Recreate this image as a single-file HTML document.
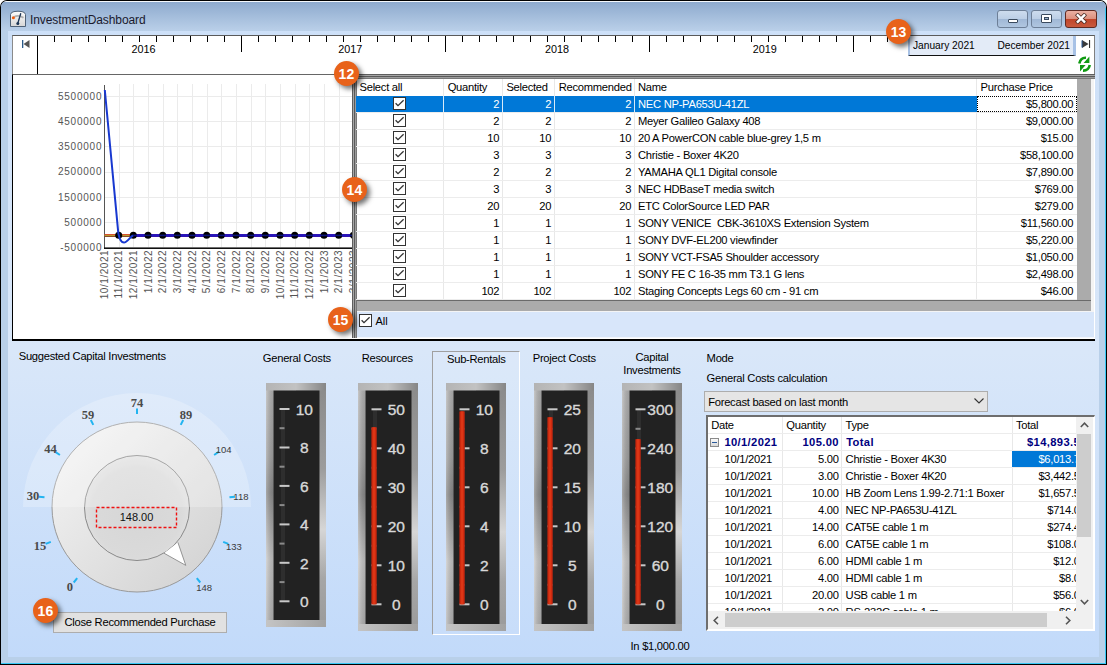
<!DOCTYPE html><html><head><meta charset="utf-8"><style>
*{margin:0;padding:0;box-sizing:border-box}
html,body{width:1107px;height:665px;overflow:hidden;background:#fff;font-family:"Liberation Sans",sans-serif;}
.abs{position:absolute}
.t{position:absolute;white-space:pre;font-size:10.5px;color:#000;line-height:1}
.u{position:absolute;white-space:pre;font-size:11.2px;letter-spacing:-0.27px;color:#000;line-height:1}
</style></head><body>

<div class="abs" style="left:0;top:0;width:1107px;height:665px;background:#000;border-radius:7px 7px 0 0"></div>
<div class="abs" style="left:1px;top:1px;width:1105px;height:663px;background:#b9d0e9;border-radius:6px 6px 0 0"></div>
<div class="abs" style="left:1px;top:1px;width:1105px;height:30px;background:linear-gradient(#f4f8fc 0,#f4f8fc 1px,#8eaace 1px,#bad0e9 100%);border-radius:6px 6px 0 0"></div>
<div class="abs" style="left:1px;top:663px;width:1105px;height:1px;background:#38c8f5"></div>
<div class="abs" style="left:1105px;top:8px;width:1px;height:656px;background:#38c8f5"></div>
<div class="abs" style="left:8px;top:31px;width:1091px;height:626px;background:linear-gradient(#cde0f8 0px,#d9e7f9 320px,#c2dafa 100%)"></div>
<svg class="abs" style="left:9px;top:10px" width="18" height="18" viewBox="9 10 18 18">
<defs><linearGradient id="ic" x1="0" y1="0" x2="0" y2="1"><stop offset="0" stop-color="#fdfdfd"/><stop offset="1" stop-color="#d6d6d6"/></linearGradient></defs>
<path d="M10.5 26.5 L10.5 14.5 Q11 12 14 11.6 Q18 10.8 22 11.6 Q25 12 25.5 14.5 L25.5 26.5 Z" fill="url(#ic)" stroke="#4f6278" stroke-width="1"/>
<path d="M14 17 Q18.5 14.5 23.5 17.8" stroke="#b0b0b0" stroke-width="1.8" fill="none"/>
<circle cx="13.4" cy="17.7" r="1.5" fill="#f05a0a"/>
<line x1="20.8" y1="13.3" x2="17.9" y2="23" stroke="#1b3556" stroke-width="1.3"/>
<circle cx="17.8" cy="23.6" r="1.5" fill="#1b3556"/>
</svg>
<div class="t" style="left:30px;top:14px;font-size:12px;letter-spacing:-0.1px;color:#1a1a2e">InvestmentDashboard</div>
<div class="abs" style="left:997px;top:10px;width:31px;height:18px;border:1px solid #6d7f97;border-radius:3px;background:linear-gradient(#cddcee 0%,#bccfe6 48%,#a0b8d6 52%,#b0c6e0 100%)"></div>
<div class="abs" style="left:1031px;top:10px;width:31px;height:18px;border:1px solid #6d7f97;border-radius:3px;background:linear-gradient(#cddcee 0%,#bccfe6 48%,#a0b8d6 52%,#b0c6e0 100%)"></div>
<div class="abs" style="left:1065px;top:10px;width:32px;height:18px;border:1px solid #5e2a22;border-radius:3px;background:linear-gradient(#eab0a2 0%,#dc907e 48%,#c0452a 52%,#c95a3e 100%)"></div>
<div class="abs" style="left:1008px;top:19px;width:10px;height:4px;background:#fff;border:1px solid #3a4a5e;border-radius:1px"></div>
<div class="abs" style="left:1041px;top:14px;width:11px;height:9px;background:#fff;border:1px solid #3a4a5e;border-radius:1px"></div>
<div class="abs" style="left:1044px;top:17px;width:5px;height:3px;background:#9bb0c9;border:1px solid #3a4a5e"></div>
<svg class="abs" style="left:1075px;top:13px" width="12" height="11" viewBox="0 0 12 11">
<path d="M2.8 2.3 L9.2 8.7 M9.2 2.3 L2.8 8.7" stroke="#4a2a22" stroke-width="4" stroke-linecap="square"/>
<path d="M2.8 2.3 L9.2 8.7 M9.2 2.3 L2.8 8.7" stroke="#fff" stroke-width="2.4" stroke-linecap="square"/>
</svg>
<div class="abs" style="left:12px;top:35px;width:1083px;height:40px;background:#fff;border-top:1px solid #5a5a5a;border-left:1px solid #8a8a8a;border-right:1px solid #808080"></div>
<svg class="abs" style="left:21px;top:39px" width="10" height="10" viewBox="0 0 10 10">
<rect x="1" y="1" width="1.3" height="8" fill="#2a5a8a"/><path d="M8.5 1 L2.5 5 L8.5 9 Z" fill="#555"/></svg>
<div class="abs" style="left:37px;top:36px;width:1px;height:38px;background:#000"></div>
<svg class="abs" style="left:0;top:0" width="1107" height="80"><rect x="54" y="36" width="1" height="6" fill="#000"/><rect x="71" y="36" width="1" height="6" fill="#000"/><rect x="88" y="36" width="1" height="6" fill="#000"/><rect x="105" y="36" width="1" height="6" fill="#000"/><rect x="122" y="36" width="1" height="6" fill="#000"/><rect x="139" y="36" width="1" height="6" fill="#000"/><rect x="156" y="36" width="1" height="6" fill="#000"/><rect x="173" y="36" width="1" height="6" fill="#000"/><rect x="190" y="36" width="1" height="6" fill="#000"/><rect x="207" y="36" width="1" height="6" fill="#000"/><rect x="224" y="36" width="1" height="6" fill="#000"/><rect x="241" y="36" width="1" height="16" fill="#000"/><rect x="258" y="36" width="1" height="6" fill="#000"/><rect x="275" y="36" width="1" height="6" fill="#000"/><rect x="292" y="36" width="1" height="6" fill="#000"/><rect x="309" y="36" width="1" height="6" fill="#000"/><rect x="326" y="36" width="1" height="6" fill="#000"/><rect x="343" y="36" width="1" height="6" fill="#000"/><rect x="360" y="36" width="1" height="6" fill="#000"/><rect x="377" y="36" width="1" height="6" fill="#000"/><rect x="394" y="36" width="1" height="6" fill="#000"/><rect x="411" y="36" width="1" height="6" fill="#000"/><rect x="428" y="36" width="1" height="6" fill="#000"/><rect x="445" y="36" width="1" height="16" fill="#000"/><rect x="462" y="36" width="1" height="6" fill="#000"/><rect x="479" y="36" width="1" height="6" fill="#000"/><rect x="496" y="36" width="1" height="6" fill="#000"/><rect x="513" y="36" width="1" height="6" fill="#000"/><rect x="530" y="36" width="1" height="6" fill="#000"/><rect x="547" y="36" width="1" height="6" fill="#000"/><rect x="564" y="36" width="1" height="6" fill="#000"/><rect x="581" y="36" width="1" height="6" fill="#000"/><rect x="598" y="36" width="1" height="6" fill="#000"/><rect x="615" y="36" width="1" height="6" fill="#000"/><rect x="632" y="36" width="1" height="6" fill="#000"/><rect x="649" y="36" width="1" height="16" fill="#000"/><rect x="666" y="36" width="1" height="6" fill="#000"/><rect x="683" y="36" width="1" height="6" fill="#000"/><rect x="700" y="36" width="1" height="6" fill="#000"/><rect x="717" y="36" width="1" height="6" fill="#000"/><rect x="734" y="36" width="1" height="6" fill="#000"/><rect x="751" y="36" width="1" height="6" fill="#000"/><rect x="768" y="36" width="1" height="6" fill="#000"/><rect x="785" y="36" width="1" height="6" fill="#000"/><rect x="802" y="36" width="1" height="6" fill="#000"/><rect x="819" y="36" width="1" height="6" fill="#000"/><rect x="836" y="36" width="1" height="6" fill="#000"/><rect x="853" y="36" width="1" height="16" fill="#000"/><rect x="870" y="36" width="1" height="6" fill="#000"/><rect x="887" y="36" width="1" height="6" fill="#000"/><rect x="904" y="36" width="1" height="6" fill="#000"/></svg>
<div class="t" style="left:131.4px;top:43.6px;font-size:10.8px">2016</div>
<div class="t" style="left:338.3px;top:43.6px;font-size:10.8px">2017</div>
<div class="t" style="left:545px;top:43.6px;font-size:10.8px">2018</div>
<div class="t" style="left:752.8px;top:43.6px;font-size:10.8px">2019</div>
<div class="abs" style="left:908px;top:36px;width:168px;height:20px;background:#e3ebf7;border-left:2px solid #a8c2e6;border-right:3px solid #a8c2e6;border-bottom:1px solid #111"></div>
<div class="t" style="left:913px;top:40.5px;font-size:10.2px">January 2021</div>
<div class="t" style="left:990px;top:40.5px;font-size:10.2px;width:80px;text-align:right">December 2021</div>
<svg class="abs" style="left:1078px;top:36px" width="16" height="40" viewBox="1078 36 16 40">
<path d="M1082 40 L1088.6 44 L1082 48 Z" fill="#3a3a3a"/><path d="M1082 40.5 L1082 47.5" stroke="#2a5a9a" stroke-width="1"/>
<rect x="1089" y="40" width="1.1" height="8" fill="#333"/>
<path d="M1079.3 63.5 Q1080.5 57.5 1086 57.8" stroke="#0f9a12" stroke-width="2.6" fill="none"/>
<path d="M1083.6 63 L1089.4 63 L1089.4 56.6 Z" fill="#0f9a12"/>
<path d="M1089.8 65 Q1088.5 70.8 1083 70.6" stroke="#0f9a12" stroke-width="2.6" fill="none"/>
<path d="M1080 65 L1085.6 65 L1080 71.5 Z" fill="#0f9a12"/>
</svg>
<div class="abs" style="left:12px;top:74px;width:1083px;height:267px;background:#fff;border-left:1px solid #000;border-bottom:2px solid #000;border-top:1px solid #666"></div>
<svg class="abs" style="left:0;top:0" width="352" height="341"><rect x="104" y="96" width="248" height="1" fill="#ebebeb"/><rect x="104" y="121" width="248" height="1" fill="#ebebeb"/><rect x="104" y="146" width="248" height="1" fill="#ebebeb"/><rect x="104" y="172" width="248" height="1" fill="#ebebeb"/><rect x="104" y="197" width="248" height="1" fill="#ebebeb"/><rect x="104" y="222" width="248" height="1" fill="#ebebeb"/><rect x="119" y="84" width="1" height="163" fill="#ebebeb"/><rect x="133" y="84" width="1" height="163" fill="#ebebeb"/><rect x="148" y="84" width="1" height="163" fill="#ebebeb"/><rect x="163" y="84" width="1" height="163" fill="#ebebeb"/><rect x="177" y="84" width="1" height="163" fill="#ebebeb"/><rect x="192" y="84" width="1" height="163" fill="#ebebeb"/><rect x="207" y="84" width="1" height="163" fill="#ebebeb"/><rect x="221" y="84" width="1" height="163" fill="#ebebeb"/><rect x="236" y="84" width="1" height="163" fill="#ebebeb"/><rect x="251" y="84" width="1" height="163" fill="#ebebeb"/><rect x="265" y="84" width="1" height="163" fill="#ebebeb"/><rect x="280" y="84" width="1" height="163" fill="#ebebeb"/><rect x="295" y="84" width="1" height="163" fill="#ebebeb"/><rect x="309" y="84" width="1" height="163" fill="#ebebeb"/><rect x="324" y="84" width="1" height="163" fill="#ebebeb"/><rect x="339" y="84" width="1" height="163" fill="#ebebeb"/><rect x="353" y="84" width="1" height="163" fill="#ebebeb"/><rect x="104" y="85" width="1" height="163" fill="#555"/><rect x="104" y="247.4" width="248" height="1.6" fill="#111"/><text x="102.3" y="99.7" font-size="10" letter-spacing="0.78" fill="#555" text-anchor="end" font-family="Liberation Sans">5500000</text><text x="102.3" y="124.9" font-size="10" letter-spacing="0.78" fill="#555" text-anchor="end" font-family="Liberation Sans">4500000</text><text x="102.3" y="150.1" font-size="10" letter-spacing="0.78" fill="#555" text-anchor="end" font-family="Liberation Sans">3500000</text><text x="102.3" y="175.3" font-size="10" letter-spacing="0.78" fill="#555" text-anchor="end" font-family="Liberation Sans">2500000</text><text x="102.3" y="200.5" font-size="10" letter-spacing="0.78" fill="#555" text-anchor="end" font-family="Liberation Sans">1500000</text><text x="102.3" y="225.7" font-size="10" letter-spacing="0.78" fill="#555" text-anchor="end" font-family="Liberation Sans">500000</text><text x="102.3" y="250.9" font-size="10" letter-spacing="0.78" fill="#555" text-anchor="end" font-family="Liberation Sans">-500000</text><rect x="104.5" y="234" width="27" height="1" fill="#d8502e"/><rect x="104.5" y="235" width="27" height="1" fill="#b89a30"/><rect x="104.5" y="236" width="27" height="1" fill="#8a4a28"/><rect x="131" y="234" width="221" height="3" fill="#3a10b0"/><circle cx="118.7" cy="235.3" r="3.5" fill="#000"/><circle cx="133.3" cy="235.3" r="3.5" fill="#000"/><circle cx="148.0" cy="235.3" r="3.5" fill="#000"/><circle cx="162.7" cy="235.3" r="3.5" fill="#000"/><circle cx="177.3" cy="235.3" r="3.5" fill="#000"/><circle cx="192.0" cy="235.3" r="3.5" fill="#000"/><circle cx="206.7" cy="235.3" r="3.5" fill="#000"/><circle cx="221.3" cy="235.3" r="3.5" fill="#000"/><circle cx="236.0" cy="235.3" r="3.5" fill="#000"/><circle cx="250.7" cy="235.3" r="3.5" fill="#000"/><circle cx="265.3" cy="235.3" r="3.5" fill="#000"/><circle cx="280.0" cy="235.3" r="3.5" fill="#000"/><circle cx="294.7" cy="235.3" r="3.5" fill="#000"/><circle cx="309.3" cy="235.3" r="3.5" fill="#000"/><circle cx="324.0" cy="235.3" r="3.5" fill="#000"/><circle cx="338.7" cy="235.3" r="3.5" fill="#000"/><circle cx="353.3" cy="235.3" r="3.5" fill="#000"/><path d="M104.8 90 L118.3 233 C119.5 240 121.5 242.5 124 242.5 C127 242.5 130 237 133 235.5" stroke="#1838d0" stroke-width="2" fill="none"/><rect x="133" y="234.6" width="219" height="1.6" fill="#1020c8" opacity="0.6"/><text transform="translate(107.6,249.8) rotate(-90)" font-size="10" letter-spacing="0.55" fill="#555" text-anchor="end" font-family="Liberation Sans">10/1/2021</text><text transform="translate(122.3,249.8) rotate(-90)" font-size="10" letter-spacing="0.55" fill="#555" text-anchor="end" font-family="Liberation Sans">11/1/2021</text><text transform="translate(136.9,249.8) rotate(-90)" font-size="10" letter-spacing="0.55" fill="#555" text-anchor="end" font-family="Liberation Sans">12/1/2021</text><text transform="translate(151.6,249.8) rotate(-90)" font-size="10" letter-spacing="0.55" fill="#555" text-anchor="end" font-family="Liberation Sans">1/1/2022</text><text transform="translate(166.3,249.8) rotate(-90)" font-size="10" letter-spacing="0.55" fill="#555" text-anchor="end" font-family="Liberation Sans">2/1/2022</text><text transform="translate(180.9,249.8) rotate(-90)" font-size="10" letter-spacing="0.55" fill="#555" text-anchor="end" font-family="Liberation Sans">3/1/2022</text><text transform="translate(195.6,249.8) rotate(-90)" font-size="10" letter-spacing="0.55" fill="#555" text-anchor="end" font-family="Liberation Sans">4/1/2022</text><text transform="translate(210.3,249.8) rotate(-90)" font-size="10" letter-spacing="0.55" fill="#555" text-anchor="end" font-family="Liberation Sans">5/1/2022</text><text transform="translate(224.9,249.8) rotate(-90)" font-size="10" letter-spacing="0.55" fill="#555" text-anchor="end" font-family="Liberation Sans">6/1/2022</text><text transform="translate(239.6,249.8) rotate(-90)" font-size="10" letter-spacing="0.55" fill="#555" text-anchor="end" font-family="Liberation Sans">7/1/2022</text><text transform="translate(254.3,249.8) rotate(-90)" font-size="10" letter-spacing="0.55" fill="#555" text-anchor="end" font-family="Liberation Sans">8/1/2022</text><text transform="translate(268.9,249.8) rotate(-90)" font-size="10" letter-spacing="0.55" fill="#555" text-anchor="end" font-family="Liberation Sans">9/1/2022</text><text transform="translate(283.6,249.8) rotate(-90)" font-size="10" letter-spacing="0.55" fill="#555" text-anchor="end" font-family="Liberation Sans">10/1/2022</text><text transform="translate(298.3,249.8) rotate(-90)" font-size="10" letter-spacing="0.55" fill="#555" text-anchor="end" font-family="Liberation Sans">11/1/2022</text><text transform="translate(312.9,249.8) rotate(-90)" font-size="10" letter-spacing="0.55" fill="#555" text-anchor="end" font-family="Liberation Sans">12/1/2022</text><text transform="translate(327.6,249.8) rotate(-90)" font-size="10" letter-spacing="0.55" fill="#555" text-anchor="end" font-family="Liberation Sans">1/1/2023</text><text transform="translate(342.3,249.8) rotate(-90)" font-size="10" letter-spacing="0.55" fill="#555" text-anchor="end" font-family="Liberation Sans">2/1/2023</text><text transform="translate(356.9,249.8) rotate(-90)" font-size="10" letter-spacing="0.55" fill="#555" text-anchor="end" font-family="Liberation Sans">3/1/2023</text></svg>
<div class="abs" style="left:352px;top:74px;width:743px;height:264px;background:#fff"></div>
<div class="abs" style="left:352px;top:74px;width:743px;height:1px;background:#5e5e5e"></div>
<div class="abs" style="left:352px;top:74px;width:1px;height:264px;background:#5e5e5e"></div>
<div class="abs" style="left:353px;top:75px;width:742px;height:1px;background:#a6a6a6"></div>
<div class="abs" style="left:353px;top:75px;width:1px;height:263px;background:#a6a6a6"></div>
<div class="abs" style="left:354px;top:76px;width:741px;height:1px;background:#5a5a5a"></div>
<div class="abs" style="left:354px;top:76px;width:1px;height:262px;background:#5a5a5a"></div>
<div class="abs" style="left:355px;top:77px;width:740px;height:1px;background:#9c9c9c"></div>
<div class="abs" style="left:355px;top:77px;width:1px;height:261px;background:#9c9c9c"></div>
<div class="abs" style="left:356px;top:78px;width:739px;height:1px;background:#787878"></div>
<div class="abs" style="left:356px;top:78px;width:1px;height:260px;background:#787878"></div>
<div class="abs" style="left:1077px;top:79px;width:14px;height:232px;background:#ababab"></div>
<div class="abs" style="left:357px;top:300px;width:734px;height:11px;background:#ababab;border-top:1px solid #6a6a6a"></div>
<div class="abs" style="left:1091px;top:79px;width:4px;height:233px;background:#f4f4f4"></div>
<div class="abs" style="left:357px;top:311px;width:738px;height:1px;background:#f4f4f4"></div>
<div class="abs" style="left:357px;top:312px;width:737px;height:25px;background:#d8e6fa"></div>
<div class="abs" style="left:1094px;top:79px;width:1px;height:259px;background:#fff"></div>
<div class="abs" style="left:357px;top:337px;width:738px;height:1px;background:#f2f6fc"></div>
<svg class="abs" style="left:359px;top:314px" width="13" height="13" viewBox="0 0 13 13"><rect x="0.5" y="0.5" width="12" height="12" fill="#fff" stroke="#333"/><path d="M2.6 6.2 L5 8.6 L10.6 3.2" stroke="#333" stroke-width="1.3" fill="none"/></svg>
<div class="t" style="left:375.5px;top:315.5px;font-size:11px">All</div>
<div class="u" style="left:359.5px;top:81.8px">Select all</div>
<div class="u" style="left:447.7px;top:81.8px">Quantity</div>
<div class="u" style="left:506.4px;top:81.8px">Selected</div>
<div class="u" style="left:558.7px;top:81.8px">Recommended</div>
<div class="u" style="left:638px;top:81.8px">Name</div>
<div class="u" style="left:980.6px;top:81.8px">Purchase Price</div>
<div class="abs" style="left:443px;top:79px;width:1px;height:221px;background:#e8e8e8"></div>
<div class="abs" style="left:502px;top:79px;width:1px;height:221px;background:#e8e8e8"></div>
<div class="abs" style="left:554px;top:79px;width:1px;height:221px;background:#e8e8e8"></div>
<div class="abs" style="left:634px;top:79px;width:1px;height:221px;background:#e8e8e8"></div>
<div class="abs" style="left:976px;top:79px;width:1px;height:221px;background:#e8e8e8"></div>
<div class="abs" style="left:356px;top:112px;width:721px;height:1px;background:#ececec"></div>
<div class="abs" style="left:356px;top:129px;width:721px;height:1px;background:#ececec"></div>
<div class="abs" style="left:356px;top:146px;width:721px;height:1px;background:#ececec"></div>
<div class="abs" style="left:356px;top:163px;width:721px;height:1px;background:#ececec"></div>
<div class="abs" style="left:356px;top:180px;width:721px;height:1px;background:#ececec"></div>
<div class="abs" style="left:356px;top:197px;width:721px;height:1px;background:#ececec"></div>
<div class="abs" style="left:356px;top:214px;width:721px;height:1px;background:#ececec"></div>
<div class="abs" style="left:356px;top:231px;width:721px;height:1px;background:#ececec"></div>
<div class="abs" style="left:356px;top:248px;width:721px;height:1px;background:#ececec"></div>
<div class="abs" style="left:356px;top:265px;width:721px;height:1px;background:#ececec"></div>
<div class="abs" style="left:356px;top:282px;width:721px;height:1px;background:#ececec"></div>
<div class="abs" style="left:356px;top:299px;width:721px;height:1px;background:#ececec"></div>
<div class="abs" style="left:356px;top:96px;width:621px;height:16px;background:#0078d7"></div>
<div class="abs" style="left:443px;top:96px;width:1px;height:16px;background:#fff;opacity:.85"></div>
<div class="abs" style="left:502px;top:96px;width:1px;height:16px;background:#fff;opacity:.85"></div>
<div class="abs" style="left:554px;top:96px;width:1px;height:16px;background:#fff;opacity:.85"></div>
<div class="abs" style="left:634px;top:96px;width:1px;height:16px;background:#fff;opacity:.85"></div>
<svg class="abs" style="left:393px;top:97px" width="13" height="13" viewBox="0 0 13 13"><rect x="0.5" y="0.5" width="12" height="12" fill="#fff" stroke="#333"/><path d="M2.6 6.2 L5 8.6 L10.6 3.2" stroke="#333" stroke-width="1.3" fill="none"/></svg>
<div class="u" style="left:443px;width:56.27px;text-align:right;top:98.7px;color:#fff">2</div>
<div class="u" style="left:502px;width:49.27px;text-align:right;top:98.7px;color:#fff">2</div>
<div class="u" style="left:554px;width:77.27px;text-align:right;top:98.7px;color:#fff">2</div>
<div class="u" style="left:638px;top:98.7px;color:#fff">NEC NP-PA653U-41ZL</div>
<div class="u" style="left:977px;width:96.27px;text-align:right;top:98.7px">$5,800.00</div>
<svg class="abs" style="left:393px;top:114px" width="13" height="13" viewBox="0 0 13 13"><rect x="0.5" y="0.5" width="12" height="12" fill="#fff" stroke="#333"/><path d="M2.6 6.2 L5 8.6 L10.6 3.2" stroke="#333" stroke-width="1.3" fill="none"/></svg>
<div class="u" style="left:443px;width:56.27px;text-align:right;top:115.7px;color:#000">2</div>
<div class="u" style="left:502px;width:49.27px;text-align:right;top:115.7px;color:#000">2</div>
<div class="u" style="left:554px;width:77.27px;text-align:right;top:115.7px;color:#000">2</div>
<div class="u" style="left:638px;top:115.7px;color:#000">Meyer Galileo Galaxy 408</div>
<div class="u" style="left:977px;width:96.27px;text-align:right;top:115.7px">$9,000.00</div>
<svg class="abs" style="left:393px;top:131px" width="13" height="13" viewBox="0 0 13 13"><rect x="0.5" y="0.5" width="12" height="12" fill="#fff" stroke="#333"/><path d="M2.6 6.2 L5 8.6 L10.6 3.2" stroke="#333" stroke-width="1.3" fill="none"/></svg>
<div class="u" style="left:443px;width:56.27px;text-align:right;top:132.7px;color:#000">10</div>
<div class="u" style="left:502px;width:49.27px;text-align:right;top:132.7px;color:#000">10</div>
<div class="u" style="left:554px;width:77.27px;text-align:right;top:132.7px;color:#000">10</div>
<div class="u" style="left:638px;top:132.7px;color:#000">20 A PowerCON cable blue-grey 1,5 m</div>
<div class="u" style="left:977px;width:96.27px;text-align:right;top:132.7px">$15.00</div>
<svg class="abs" style="left:393px;top:148px" width="13" height="13" viewBox="0 0 13 13"><rect x="0.5" y="0.5" width="12" height="12" fill="#fff" stroke="#333"/><path d="M2.6 6.2 L5 8.6 L10.6 3.2" stroke="#333" stroke-width="1.3" fill="none"/></svg>
<div class="u" style="left:443px;width:56.27px;text-align:right;top:149.7px;color:#000">3</div>
<div class="u" style="left:502px;width:49.27px;text-align:right;top:149.7px;color:#000">3</div>
<div class="u" style="left:554px;width:77.27px;text-align:right;top:149.7px;color:#000">3</div>
<div class="u" style="left:638px;top:149.7px;color:#000">Christie - Boxer 4K20</div>
<div class="u" style="left:977px;width:96.27px;text-align:right;top:149.7px">$58,100.00</div>
<svg class="abs" style="left:393px;top:165px" width="13" height="13" viewBox="0 0 13 13"><rect x="0.5" y="0.5" width="12" height="12" fill="#fff" stroke="#333"/><path d="M2.6 6.2 L5 8.6 L10.6 3.2" stroke="#333" stroke-width="1.3" fill="none"/></svg>
<div class="u" style="left:443px;width:56.27px;text-align:right;top:166.7px;color:#000">2</div>
<div class="u" style="left:502px;width:49.27px;text-align:right;top:166.7px;color:#000">2</div>
<div class="u" style="left:554px;width:77.27px;text-align:right;top:166.7px;color:#000">2</div>
<div class="u" style="left:638px;top:166.7px;color:#000">YAMAHA QL1 Digital console</div>
<div class="u" style="left:977px;width:96.27px;text-align:right;top:166.7px">$7,890.00</div>
<svg class="abs" style="left:393px;top:182px" width="13" height="13" viewBox="0 0 13 13"><rect x="0.5" y="0.5" width="12" height="12" fill="#fff" stroke="#333"/><path d="M2.6 6.2 L5 8.6 L10.6 3.2" stroke="#333" stroke-width="1.3" fill="none"/></svg>
<div class="u" style="left:443px;width:56.27px;text-align:right;top:183.7px;color:#000">3</div>
<div class="u" style="left:502px;width:49.27px;text-align:right;top:183.7px;color:#000">3</div>
<div class="u" style="left:554px;width:77.27px;text-align:right;top:183.7px;color:#000">3</div>
<div class="u" style="left:638px;top:183.7px;color:#000">NEC HDBaseT media switch</div>
<div class="u" style="left:977px;width:96.27px;text-align:right;top:183.7px">$769.00</div>
<svg class="abs" style="left:393px;top:199px" width="13" height="13" viewBox="0 0 13 13"><rect x="0.5" y="0.5" width="12" height="12" fill="#fff" stroke="#333"/><path d="M2.6 6.2 L5 8.6 L10.6 3.2" stroke="#333" stroke-width="1.3" fill="none"/></svg>
<div class="u" style="left:443px;width:56.27px;text-align:right;top:200.7px;color:#000">20</div>
<div class="u" style="left:502px;width:49.27px;text-align:right;top:200.7px;color:#000">20</div>
<div class="u" style="left:554px;width:77.27px;text-align:right;top:200.7px;color:#000">20</div>
<div class="u" style="left:638px;top:200.7px;color:#000">ETC ColorSource LED PAR</div>
<div class="u" style="left:977px;width:96.27px;text-align:right;top:200.7px">$279.00</div>
<svg class="abs" style="left:393px;top:216px" width="13" height="13" viewBox="0 0 13 13"><rect x="0.5" y="0.5" width="12" height="12" fill="#fff" stroke="#333"/><path d="M2.6 6.2 L5 8.6 L10.6 3.2" stroke="#333" stroke-width="1.3" fill="none"/></svg>
<div class="u" style="left:443px;width:56.27px;text-align:right;top:217.7px;color:#000">1</div>
<div class="u" style="left:502px;width:49.27px;text-align:right;top:217.7px;color:#000">1</div>
<div class="u" style="left:554px;width:77.27px;text-align:right;top:217.7px;color:#000">1</div>
<div class="u" style="left:638px;top:217.7px;color:#000">SONY VENICE  CBK-3610XS Extension System</div>
<div class="u" style="left:977px;width:96.27px;text-align:right;top:217.7px">$11,560.00</div>
<svg class="abs" style="left:393px;top:233px" width="13" height="13" viewBox="0 0 13 13"><rect x="0.5" y="0.5" width="12" height="12" fill="#fff" stroke="#333"/><path d="M2.6 6.2 L5 8.6 L10.6 3.2" stroke="#333" stroke-width="1.3" fill="none"/></svg>
<div class="u" style="left:443px;width:56.27px;text-align:right;top:234.7px;color:#000">1</div>
<div class="u" style="left:502px;width:49.27px;text-align:right;top:234.7px;color:#000">1</div>
<div class="u" style="left:554px;width:77.27px;text-align:right;top:234.7px;color:#000">1</div>
<div class="u" style="left:638px;top:234.7px;color:#000">SONY DVF-EL200 viewfinder</div>
<div class="u" style="left:977px;width:96.27px;text-align:right;top:234.7px">$5,220.00</div>
<svg class="abs" style="left:393px;top:250px" width="13" height="13" viewBox="0 0 13 13"><rect x="0.5" y="0.5" width="12" height="12" fill="#fff" stroke="#333"/><path d="M2.6 6.2 L5 8.6 L10.6 3.2" stroke="#333" stroke-width="1.3" fill="none"/></svg>
<div class="u" style="left:443px;width:56.27px;text-align:right;top:251.7px;color:#000">1</div>
<div class="u" style="left:502px;width:49.27px;text-align:right;top:251.7px;color:#000">1</div>
<div class="u" style="left:554px;width:77.27px;text-align:right;top:251.7px;color:#000">1</div>
<div class="u" style="left:638px;top:251.7px;color:#000">SONY VCT-FSA5 Shoulder accessory</div>
<div class="u" style="left:977px;width:96.27px;text-align:right;top:251.7px">$1,050.00</div>
<svg class="abs" style="left:393px;top:267px" width="13" height="13" viewBox="0 0 13 13"><rect x="0.5" y="0.5" width="12" height="12" fill="#fff" stroke="#333"/><path d="M2.6 6.2 L5 8.6 L10.6 3.2" stroke="#333" stroke-width="1.3" fill="none"/></svg>
<div class="u" style="left:443px;width:56.27px;text-align:right;top:268.7px;color:#000">1</div>
<div class="u" style="left:502px;width:49.27px;text-align:right;top:268.7px;color:#000">1</div>
<div class="u" style="left:554px;width:77.27px;text-align:right;top:268.7px;color:#000">1</div>
<div class="u" style="left:638px;top:268.7px;color:#000">SONY FE C 16-35 mm T3.1 G lens</div>
<div class="u" style="left:977px;width:96.27px;text-align:right;top:268.7px">$2,498.00</div>
<svg class="abs" style="left:393px;top:284px" width="13" height="13" viewBox="0 0 13 13"><rect x="0.5" y="0.5" width="12" height="12" fill="#fff" stroke="#333"/><path d="M2.6 6.2 L5 8.6 L10.6 3.2" stroke="#333" stroke-width="1.3" fill="none"/></svg>
<div class="u" style="left:443px;width:56.27px;text-align:right;top:285.7px;color:#000">102</div>
<div class="u" style="left:502px;width:49.27px;text-align:right;top:285.7px;color:#000">102</div>
<div class="u" style="left:554px;width:77.27px;text-align:right;top:285.7px;color:#000">102</div>
<div class="u" style="left:638px;top:285.7px;color:#000">Staging Concepts Legs 60 cm - 91 cm</div>
<div class="u" style="left:977px;width:96.27px;text-align:right;top:285.7px">$46.00</div>
<div class="abs" style="left:977px;top:96px;width:100px;height:16px;border:1px dotted #000"></div>
<div class="u" style="left:18.7px;top:351.2px">Suggested Capital Investments</div>
<svg class="abs" style="left:0;top:340px" width="260" height="300" viewBox="0 340 260 300"><defs><linearGradient id="kn1" x1="0" y1="0" x2="1" y2="1"><stop offset="0" stop-color="#f6f6f6"/><stop offset="1" stop-color="#d0d0d0"/></linearGradient><radialGradient id="kn2" cx="0.5" cy="0.55" r="0.6"><stop offset="0" stop-color="#d6d6d6"/><stop offset="0.7" stop-color="#dadada"/><stop offset="1" stop-color="#e6e6e6"/></radialGradient></defs><circle cx="137" cy="507" r="85" fill="url(#kn1)" stroke="#999" stroke-width="1"/><circle cx="137" cy="508" r="52.5" fill="url(#kn2)" stroke="#8a8a8a" stroke-width="1"/><path d="M23 507 A114 114 0 0 1 251 507 Z" fill="#ffffff" fill-opacity="0.24"/><path d="M164 553.2 L185.8 565.4 L177.9 542.4" fill="#fff" stroke="#8a8a8a" stroke-width="0.9"/><line x1="77.2" y1="578.2" x2="73.7" y2="582.5" stroke="#22b4f0" stroke-width="2"/><text x="69.8" y="591.1" font-size="12.5" font-weight="bold" fill="#4a4a4a" text-anchor="middle" font-family="Liberation Serif">0</text><line x1="50.8" y1="541.8" x2="45.7" y2="543.9" stroke="#22b4f0" stroke-width="2"/><text x="40.1" y="550.1" font-size="12.5" font-weight="bold" fill="#4a4a4a" text-anchor="middle" font-family="Liberation Serif">15</text><line x1="44.5" y1="497.3" x2="39.0" y2="496.7" stroke="#22b4f0" stroke-width="2"/><text x="33.1" y="500.1" font-size="12.5" font-weight="bold" fill="#4a4a4a" text-anchor="middle" font-family="Liberation Serif">30</text><line x1="59.9" y1="455.0" x2="55.3" y2="451.9" stroke="#22b4f0" stroke-width="2"/><text x="50.4" y="452.6" font-size="12.5" font-weight="bold" fill="#4a4a4a" text-anchor="middle" font-family="Liberation Serif">44</text><line x1="93.3" y1="424.9" x2="90.8" y2="420.0" stroke="#22b4f0" stroke-width="2"/><text x="87.9" y="418.7" font-size="12.5" font-weight="bold" fill="#4a4a4a" text-anchor="middle" font-family="Liberation Serif">59</text><line x1="137.0" y1="414.0" x2="137.0" y2="408.5" stroke="#22b4f0" stroke-width="2"/><text x="137.0" y="406.5" font-size="12.5" font-weight="bold" fill="#4a4a4a" text-anchor="middle" font-family="Liberation Serif">74</text><line x1="180.7" y1="424.9" x2="183.2" y2="420.0" stroke="#22b4f0" stroke-width="2"/><text x="186.1" y="418.7" font-size="12.5" font-weight="bold" fill="#4a4a4a" text-anchor="middle" font-family="Liberation Serif">89</text><line x1="214.1" y1="455.0" x2="218.7" y2="451.9" stroke="#22b4f0" stroke-width="2"/><text x="223.6" y="452.6" font-size="9.5" font-weight="normal" fill="#3a3a3a" text-anchor="middle" font-family="Liberation Sans">104</text><line x1="229.5" y1="497.3" x2="235.0" y2="496.7" stroke="#22b4f0" stroke-width="2"/><text x="240.9" y="500.1" font-size="9.5" font-weight="normal" fill="#3a3a3a" text-anchor="middle" font-family="Liberation Sans">118</text><line x1="223.2" y1="541.8" x2="228.3" y2="543.9" stroke="#22b4f0" stroke-width="2"/><text x="233.9" y="550.1" font-size="9.5" font-weight="normal" fill="#3a3a3a" text-anchor="middle" font-family="Liberation Sans">133</text><line x1="196.8" y1="578.2" x2="200.3" y2="582.5" stroke="#22b4f0" stroke-width="2"/><text x="204.2" y="591.1" font-size="9.5" font-weight="normal" fill="#3a3a3a" text-anchor="middle" font-family="Liberation Sans">148</text><rect x="96.5" y="507.5" width="80" height="20" fill="none" stroke="#f01010" stroke-width="1.4" stroke-dasharray="3 2"/><text x="136.5" y="521" font-size="11" fill="#111" text-anchor="middle" font-family="Liberation Sans">148.00</text></svg>
<div class="abs" style="left:53px;top:612px;width:174px;height:21px;background:#e1e1e1;border:1px solid #adadad"></div>
<div class="u" style="left:53px;width:174px;text-align:center;top:616.6px">Close Recommended Purchase</div>
<div class="abs" style="left:432px;top:351px;width:88px;height:284px;border-left:1px solid #a0a0a0;border-top:1px solid #a0a0a0;border-right:1px solid #fff;border-bottom:1px solid #fff;background:rgba(255,255,255,0.08)"></div>
<div class="u" style="left:262.8px;top:352.5px">General Costs</div>
<div class="u" style="left:361.7px;top:352.5px">Resources</div>
<div class="u" style="left:447px;top:353.7px">Sub-Rentals</div>
<div class="u" style="left:532.7px;top:352.5px">Project Costs</div>
<div class="u" style="left:622px;width:60px;text-align:center;top:351px;line-height:12.9px">Capital<br>Investments</div>
<div class="u" style="left:630.5px;top:640.9px">In $1,000.00</div>
<svg class="abs" style="left:266px;top:383px" width="60" height="244" viewBox="0 0 60 244"><defs><linearGradient id="gl266" x1="0" y1="0" x2="0" y2="1"><stop offset="0" stop-color="#b8b8b8"/><stop offset="0.3" stop-color="#a4a4a4"/><stop offset="0.45" stop-color="#8c8c8c"/><stop offset="0.72" stop-color="#c9c9c9"/><stop offset="1" stop-color="#b4b4b4"/></linearGradient><linearGradient id="gr266" x1="0" y1="0" x2="0" y2="1"><stop offset="0" stop-color="#8a8a8a"/><stop offset="0.35" stop-color="#9c9c9c"/><stop offset="0.6" stop-color="#d6d6d6"/><stop offset="0.8" stop-color="#a6a6a6"/><stop offset="1" stop-color="#9a9a9a"/></linearGradient><linearGradient id="gt266" x1="0" y1="0" x2="1" y2="0"><stop offset="0" stop-color="#b4b4b4"/><stop offset="0.5" stop-color="#c2c2c2"/><stop offset="1" stop-color="#868686"/></linearGradient><linearGradient id="gb266" x1="0" y1="0" x2="1" y2="0"><stop offset="0" stop-color="#c4c4c4"/><stop offset="1" stop-color="#a2a2a2"/></linearGradient><linearGradient id="gh266" x1="0" y1="0" x2="1" y2="0"><stop offset="0" stop-color="#fff" stop-opacity="0.25"/><stop offset="1" stop-color="#000" stop-opacity="0.12"/></linearGradient></defs><rect x="0" y="0" width="60" height="244" fill="url(#gl266)"/><rect x="30" y="0" width="30" height="244" fill="url(#gr266)"/><rect x="0" y="0" width="7.5" height="244" fill="url(#gh266)"/><rect x="0" y="0" width="60" height="7.5" fill="url(#gt266)"/><rect x="0" y="237" width="60" height="7" fill="url(#gb266)"/><rect x="7.5" y="7.5" width="46" height="229.5" fill="#222"/><rect x="15" y="26" width="4" height="192.29999999999995" fill="#2e2e2e"/><rect x="13.5" y="217.3" width="10" height="2" fill="#c8c8c8"/><text x="38.3" y="224.3" font-size="14.5" font-weight="normal" fill="#d8d8d8" stroke="#d8d8d8" stroke-width="0.35" text-anchor="middle" font-family="Liberation Sans" transform="translate(38.3,0) scale(1.07,1) translate(-38.3,0)">0</text><rect x="13.5" y="198.1" width="5" height="2" fill="#8a8a8a"/><rect x="13.5" y="178.8" width="10" height="2" fill="#c8c8c8"/><text x="38.3" y="185.8" font-size="14.5" font-weight="normal" fill="#d8d8d8" stroke="#d8d8d8" stroke-width="0.35" text-anchor="middle" font-family="Liberation Sans" transform="translate(38.3,0) scale(1.07,1) translate(-38.3,0)">2</text><rect x="13.5" y="159.6" width="5" height="2" fill="#8a8a8a"/><rect x="13.5" y="140.4" width="10" height="2" fill="#c8c8c8"/><text x="38.3" y="147.4" font-size="14.5" font-weight="normal" fill="#d8d8d8" stroke="#d8d8d8" stroke-width="0.35" text-anchor="middle" font-family="Liberation Sans" transform="translate(38.3,0) scale(1.07,1) translate(-38.3,0)">4</text><rect x="13.5" y="121.1" width="5" height="2" fill="#8a8a8a"/><rect x="13.5" y="101.9" width="10" height="2" fill="#c8c8c8"/><text x="38.3" y="108.9" font-size="14.5" font-weight="normal" fill="#d8d8d8" stroke="#d8d8d8" stroke-width="0.35" text-anchor="middle" font-family="Liberation Sans" transform="translate(38.3,0) scale(1.07,1) translate(-38.3,0)">6</text><rect x="13.5" y="82.7" width="5" height="2" fill="#8a8a8a"/><rect x="13.5" y="63.5" width="10" height="2" fill="#c8c8c8"/><text x="38.3" y="70.5" font-size="14.5" font-weight="normal" fill="#d8d8d8" stroke="#d8d8d8" stroke-width="0.35" text-anchor="middle" font-family="Liberation Sans" transform="translate(38.3,0) scale(1.07,1) translate(-38.3,0)">8</text><rect x="13.5" y="44.2" width="5" height="2" fill="#8a8a8a"/><rect x="13.5" y="25.0" width="10" height="2" fill="#c8c8c8"/><text x="38.3" y="32.0" font-size="14.5" font-weight="normal" fill="#d8d8d8" stroke="#d8d8d8" stroke-width="0.35" text-anchor="middle" font-family="Liberation Sans" transform="translate(38.3,0) scale(1.07,1) translate(-38.3,0)">10</text></svg>
<svg class="abs" style="left:358px;top:383px" width="60" height="248" viewBox="0 0 60 248"><defs><linearGradient id="gl358" x1="0" y1="0" x2="0" y2="1"><stop offset="0" stop-color="#b8b8b8"/><stop offset="0.3" stop-color="#a4a4a4"/><stop offset="0.45" stop-color="#8c8c8c"/><stop offset="0.72" stop-color="#c9c9c9"/><stop offset="1" stop-color="#b4b4b4"/></linearGradient><linearGradient id="gr358" x1="0" y1="0" x2="0" y2="1"><stop offset="0" stop-color="#8a8a8a"/><stop offset="0.35" stop-color="#9c9c9c"/><stop offset="0.6" stop-color="#d6d6d6"/><stop offset="0.8" stop-color="#a6a6a6"/><stop offset="1" stop-color="#9a9a9a"/></linearGradient><linearGradient id="gt358" x1="0" y1="0" x2="1" y2="0"><stop offset="0" stop-color="#b4b4b4"/><stop offset="0.5" stop-color="#c2c2c2"/><stop offset="1" stop-color="#868686"/></linearGradient><linearGradient id="gb358" x1="0" y1="0" x2="1" y2="0"><stop offset="0" stop-color="#c4c4c4"/><stop offset="1" stop-color="#a2a2a2"/></linearGradient><linearGradient id="gh358" x1="0" y1="0" x2="1" y2="0"><stop offset="0" stop-color="#fff" stop-opacity="0.25"/><stop offset="1" stop-color="#000" stop-opacity="0.12"/></linearGradient></defs><rect x="0" y="0" width="60" height="248" fill="url(#gl358)"/><rect x="30" y="0" width="30" height="248" fill="url(#gr358)"/><rect x="0" y="0" width="7.5" height="248" fill="url(#gh358)"/><rect x="0" y="0" width="60" height="7.5" fill="url(#gt358)"/><rect x="0" y="241" width="60" height="7" fill="url(#gb358)"/><rect x="7.5" y="7.5" width="46" height="233.5" fill="#222"/><rect x="15" y="26.30000000000001" width="4" height="194.99999999999994" fill="#2e2e2e"/><rect x="13.5" y="220.3" width="10" height="2" fill="#c8c8c8"/><text x="38.3" y="227.3" font-size="14.5" font-weight="normal" fill="#d8d8d8" stroke="#d8d8d8" stroke-width="0.35" text-anchor="middle" font-family="Liberation Sans" transform="translate(38.3,0) scale(1.07,1) translate(-38.3,0)">0</text><rect x="13.5" y="200.8" width="5" height="2" fill="#8a8a8a"/><rect x="13.5" y="181.3" width="10" height="2" fill="#c8c8c8"/><text x="38.3" y="188.3" font-size="14.5" font-weight="normal" fill="#d8d8d8" stroke="#d8d8d8" stroke-width="0.35" text-anchor="middle" font-family="Liberation Sans" transform="translate(38.3,0) scale(1.07,1) translate(-38.3,0)">10</text><rect x="13.5" y="161.8" width="5" height="2" fill="#8a8a8a"/><rect x="13.5" y="142.3" width="10" height="2" fill="#c8c8c8"/><text x="38.3" y="149.3" font-size="14.5" font-weight="normal" fill="#d8d8d8" stroke="#d8d8d8" stroke-width="0.35" text-anchor="middle" font-family="Liberation Sans" transform="translate(38.3,0) scale(1.07,1) translate(-38.3,0)">20</text><rect x="13.5" y="122.8" width="5" height="2" fill="#8a8a8a"/><rect x="13.5" y="103.3" width="10" height="2" fill="#c8c8c8"/><text x="38.3" y="110.3" font-size="14.5" font-weight="normal" fill="#d8d8d8" stroke="#d8d8d8" stroke-width="0.35" text-anchor="middle" font-family="Liberation Sans" transform="translate(38.3,0) scale(1.07,1) translate(-38.3,0)">30</text><rect x="13.5" y="83.8" width="5" height="2" fill="#8a8a8a"/><rect x="13.5" y="64.3" width="10" height="2" fill="#c8c8c8"/><text x="38.3" y="71.3" font-size="14.5" font-weight="normal" fill="#d8d8d8" stroke="#d8d8d8" stroke-width="0.35" text-anchor="middle" font-family="Liberation Sans" transform="translate(38.3,0) scale(1.07,1) translate(-38.3,0)">40</text><rect x="13.5" y="44.8" width="5" height="2" fill="#8a8a8a"/><rect x="13.5" y="25.3" width="10" height="2" fill="#c8c8c8"/><text x="38.3" y="32.3" font-size="14.5" font-weight="normal" fill="#d8d8d8" stroke="#d8d8d8" stroke-width="0.35" text-anchor="middle" font-family="Liberation Sans" transform="translate(38.3,0) scale(1.07,1) translate(-38.3,0)">50</text><rect x="13.3" y="44.30000000000001" width="5.5" height="176.99999999999994" fill="#b02410"/><rect x="14.2" y="44.30000000000001" width="3.7" height="176.99999999999994" fill="#d42c10"/><rect x="15.3" y="44.30000000000001" width="1.4" height="176.99999999999994" fill="#e4401c" opacity="0.8"/></svg>
<svg class="abs" style="left:446px;top:383px" width="60" height="248" viewBox="0 0 60 248"><defs><linearGradient id="gl446" x1="0" y1="0" x2="0" y2="1"><stop offset="0" stop-color="#b8b8b8"/><stop offset="0.3" stop-color="#a4a4a4"/><stop offset="0.45" stop-color="#8c8c8c"/><stop offset="0.72" stop-color="#c9c9c9"/><stop offset="1" stop-color="#b4b4b4"/></linearGradient><linearGradient id="gr446" x1="0" y1="0" x2="0" y2="1"><stop offset="0" stop-color="#8a8a8a"/><stop offset="0.35" stop-color="#9c9c9c"/><stop offset="0.6" stop-color="#d6d6d6"/><stop offset="0.8" stop-color="#a6a6a6"/><stop offset="1" stop-color="#9a9a9a"/></linearGradient><linearGradient id="gt446" x1="0" y1="0" x2="1" y2="0"><stop offset="0" stop-color="#b4b4b4"/><stop offset="0.5" stop-color="#c2c2c2"/><stop offset="1" stop-color="#868686"/></linearGradient><linearGradient id="gb446" x1="0" y1="0" x2="1" y2="0"><stop offset="0" stop-color="#c4c4c4"/><stop offset="1" stop-color="#a2a2a2"/></linearGradient><linearGradient id="gh446" x1="0" y1="0" x2="1" y2="0"><stop offset="0" stop-color="#fff" stop-opacity="0.25"/><stop offset="1" stop-color="#000" stop-opacity="0.12"/></linearGradient></defs><rect x="0" y="0" width="60" height="248" fill="url(#gl446)"/><rect x="30" y="0" width="30" height="248" fill="url(#gr446)"/><rect x="0" y="0" width="7.5" height="248" fill="url(#gh446)"/><rect x="0" y="0" width="60" height="7.5" fill="url(#gt446)"/><rect x="0" y="241" width="60" height="7" fill="url(#gb446)"/><rect x="7.5" y="7.5" width="46" height="233.5" fill="#222"/><rect x="15" y="26.30000000000001" width="4" height="194.99999999999994" fill="#2e2e2e"/><rect x="13.5" y="220.3" width="10" height="2" fill="#c8c8c8"/><text x="38.3" y="227.3" font-size="14.5" font-weight="normal" fill="#d8d8d8" stroke="#d8d8d8" stroke-width="0.35" text-anchor="middle" font-family="Liberation Sans" transform="translate(38.3,0) scale(1.07,1) translate(-38.3,0)">0</text><rect x="13.5" y="200.8" width="5" height="2" fill="#8a8a8a"/><rect x="13.5" y="181.3" width="10" height="2" fill="#c8c8c8"/><text x="38.3" y="188.3" font-size="14.5" font-weight="normal" fill="#d8d8d8" stroke="#d8d8d8" stroke-width="0.35" text-anchor="middle" font-family="Liberation Sans" transform="translate(38.3,0) scale(1.07,1) translate(-38.3,0)">2</text><rect x="13.5" y="161.8" width="5" height="2" fill="#8a8a8a"/><rect x="13.5" y="142.3" width="10" height="2" fill="#c8c8c8"/><text x="38.3" y="149.3" font-size="14.5" font-weight="normal" fill="#d8d8d8" stroke="#d8d8d8" stroke-width="0.35" text-anchor="middle" font-family="Liberation Sans" transform="translate(38.3,0) scale(1.07,1) translate(-38.3,0)">4</text><rect x="13.5" y="122.8" width="5" height="2" fill="#8a8a8a"/><rect x="13.5" y="103.3" width="10" height="2" fill="#c8c8c8"/><text x="38.3" y="110.3" font-size="14.5" font-weight="normal" fill="#d8d8d8" stroke="#d8d8d8" stroke-width="0.35" text-anchor="middle" font-family="Liberation Sans" transform="translate(38.3,0) scale(1.07,1) translate(-38.3,0)">6</text><rect x="13.5" y="83.8" width="5" height="2" fill="#8a8a8a"/><rect x="13.5" y="64.3" width="10" height="2" fill="#c8c8c8"/><text x="38.3" y="71.3" font-size="14.5" font-weight="normal" fill="#d8d8d8" stroke="#d8d8d8" stroke-width="0.35" text-anchor="middle" font-family="Liberation Sans" transform="translate(38.3,0) scale(1.07,1) translate(-38.3,0)">8</text><rect x="13.5" y="44.8" width="5" height="2" fill="#8a8a8a"/><rect x="13.5" y="25.3" width="10" height="2" fill="#c8c8c8"/><text x="38.3" y="32.3" font-size="14.5" font-weight="normal" fill="#d8d8d8" stroke="#d8d8d8" stroke-width="0.35" text-anchor="middle" font-family="Liberation Sans" transform="translate(38.3,0) scale(1.07,1) translate(-38.3,0)">10</text><rect x="13.3" y="28.399999999999977" width="5.5" height="192.89999999999998" fill="#b02410"/><rect x="14.2" y="28.399999999999977" width="3.7" height="192.89999999999998" fill="#d42c10"/><rect x="15.3" y="28.399999999999977" width="1.4" height="192.89999999999998" fill="#e4401c" opacity="0.8"/></svg>
<svg class="abs" style="left:534px;top:383px" width="60" height="248" viewBox="0 0 60 248"><defs><linearGradient id="gl534" x1="0" y1="0" x2="0" y2="1"><stop offset="0" stop-color="#b8b8b8"/><stop offset="0.3" stop-color="#a4a4a4"/><stop offset="0.45" stop-color="#8c8c8c"/><stop offset="0.72" stop-color="#c9c9c9"/><stop offset="1" stop-color="#b4b4b4"/></linearGradient><linearGradient id="gr534" x1="0" y1="0" x2="0" y2="1"><stop offset="0" stop-color="#8a8a8a"/><stop offset="0.35" stop-color="#9c9c9c"/><stop offset="0.6" stop-color="#d6d6d6"/><stop offset="0.8" stop-color="#a6a6a6"/><stop offset="1" stop-color="#9a9a9a"/></linearGradient><linearGradient id="gt534" x1="0" y1="0" x2="1" y2="0"><stop offset="0" stop-color="#b4b4b4"/><stop offset="0.5" stop-color="#c2c2c2"/><stop offset="1" stop-color="#868686"/></linearGradient><linearGradient id="gb534" x1="0" y1="0" x2="1" y2="0"><stop offset="0" stop-color="#c4c4c4"/><stop offset="1" stop-color="#a2a2a2"/></linearGradient><linearGradient id="gh534" x1="0" y1="0" x2="1" y2="0"><stop offset="0" stop-color="#fff" stop-opacity="0.25"/><stop offset="1" stop-color="#000" stop-opacity="0.12"/></linearGradient></defs><rect x="0" y="0" width="60" height="248" fill="url(#gl534)"/><rect x="30" y="0" width="30" height="248" fill="url(#gr534)"/><rect x="0" y="0" width="7.5" height="248" fill="url(#gh534)"/><rect x="0" y="0" width="60" height="7.5" fill="url(#gt534)"/><rect x="0" y="241" width="60" height="7" fill="url(#gb534)"/><rect x="7.5" y="7.5" width="46" height="233.5" fill="#222"/><rect x="15" y="26.30000000000001" width="4" height="194.99999999999994" fill="#2e2e2e"/><rect x="13.5" y="220.3" width="10" height="2" fill="#c8c8c8"/><text x="38.3" y="227.3" font-size="14.5" font-weight="normal" fill="#d8d8d8" stroke="#d8d8d8" stroke-width="0.35" text-anchor="middle" font-family="Liberation Sans" transform="translate(38.3,0) scale(1.07,1) translate(-38.3,0)">0</text><rect x="13.5" y="200.8" width="5" height="2" fill="#8a8a8a"/><rect x="13.5" y="181.3" width="10" height="2" fill="#c8c8c8"/><text x="38.3" y="188.3" font-size="14.5" font-weight="normal" fill="#d8d8d8" stroke="#d8d8d8" stroke-width="0.35" text-anchor="middle" font-family="Liberation Sans" transform="translate(38.3,0) scale(1.07,1) translate(-38.3,0)">5</text><rect x="13.5" y="161.8" width="5" height="2" fill="#8a8a8a"/><rect x="13.5" y="142.3" width="10" height="2" fill="#c8c8c8"/><text x="38.3" y="149.3" font-size="14.5" font-weight="normal" fill="#d8d8d8" stroke="#d8d8d8" stroke-width="0.35" text-anchor="middle" font-family="Liberation Sans" transform="translate(38.3,0) scale(1.07,1) translate(-38.3,0)">10</text><rect x="13.5" y="122.8" width="5" height="2" fill="#8a8a8a"/><rect x="13.5" y="103.3" width="10" height="2" fill="#c8c8c8"/><text x="38.3" y="110.3" font-size="14.5" font-weight="normal" fill="#d8d8d8" stroke="#d8d8d8" stroke-width="0.35" text-anchor="middle" font-family="Liberation Sans" transform="translate(38.3,0) scale(1.07,1) translate(-38.3,0)">15</text><rect x="13.5" y="83.8" width="5" height="2" fill="#8a8a8a"/><rect x="13.5" y="64.3" width="10" height="2" fill="#c8c8c8"/><text x="38.3" y="71.3" font-size="14.5" font-weight="normal" fill="#d8d8d8" stroke="#d8d8d8" stroke-width="0.35" text-anchor="middle" font-family="Liberation Sans" transform="translate(38.3,0) scale(1.07,1) translate(-38.3,0)">20</text><rect x="13.5" y="44.8" width="5" height="2" fill="#8a8a8a"/><rect x="13.5" y="25.3" width="10" height="2" fill="#c8c8c8"/><text x="38.3" y="32.3" font-size="14.5" font-weight="normal" fill="#d8d8d8" stroke="#d8d8d8" stroke-width="0.35" text-anchor="middle" font-family="Liberation Sans" transform="translate(38.3,0) scale(1.07,1) translate(-38.3,0)">25</text><rect x="13.3" y="34.30000000000001" width="5.5" height="186.99999999999994" fill="#b02410"/><rect x="14.2" y="34.30000000000001" width="3.7" height="186.99999999999994" fill="#d42c10"/><rect x="15.3" y="34.30000000000001" width="1.4" height="186.99999999999994" fill="#e4401c" opacity="0.8"/></svg>
<svg class="abs" style="left:622px;top:383px" width="60" height="248" viewBox="0 0 60 248"><defs><linearGradient id="gl622" x1="0" y1="0" x2="0" y2="1"><stop offset="0" stop-color="#b8b8b8"/><stop offset="0.3" stop-color="#a4a4a4"/><stop offset="0.45" stop-color="#8c8c8c"/><stop offset="0.72" stop-color="#c9c9c9"/><stop offset="1" stop-color="#b4b4b4"/></linearGradient><linearGradient id="gr622" x1="0" y1="0" x2="0" y2="1"><stop offset="0" stop-color="#8a8a8a"/><stop offset="0.35" stop-color="#9c9c9c"/><stop offset="0.6" stop-color="#d6d6d6"/><stop offset="0.8" stop-color="#a6a6a6"/><stop offset="1" stop-color="#9a9a9a"/></linearGradient><linearGradient id="gt622" x1="0" y1="0" x2="1" y2="0"><stop offset="0" stop-color="#b4b4b4"/><stop offset="0.5" stop-color="#c2c2c2"/><stop offset="1" stop-color="#868686"/></linearGradient><linearGradient id="gb622" x1="0" y1="0" x2="1" y2="0"><stop offset="0" stop-color="#c4c4c4"/><stop offset="1" stop-color="#a2a2a2"/></linearGradient><linearGradient id="gh622" x1="0" y1="0" x2="1" y2="0"><stop offset="0" stop-color="#fff" stop-opacity="0.25"/><stop offset="1" stop-color="#000" stop-opacity="0.12"/></linearGradient></defs><rect x="0" y="0" width="60" height="248" fill="url(#gl622)"/><rect x="30" y="0" width="30" height="248" fill="url(#gr622)"/><rect x="0" y="0" width="7.5" height="248" fill="url(#gh622)"/><rect x="0" y="0" width="60" height="7.5" fill="url(#gt622)"/><rect x="0" y="241" width="60" height="7" fill="url(#gb622)"/><rect x="7.5" y="7.5" width="46" height="233.5" fill="#222"/><rect x="15" y="26.30000000000001" width="4" height="194.99999999999994" fill="#2e2e2e"/><rect x="13.5" y="220.3" width="10" height="2" fill="#c8c8c8"/><text x="38.3" y="227.3" font-size="14.5" font-weight="normal" fill="#d8d8d8" stroke="#d8d8d8" stroke-width="0.35" text-anchor="middle" font-family="Liberation Sans" transform="translate(38.3,0) scale(1.07,1) translate(-38.3,0)">0</text><rect x="13.5" y="200.8" width="5" height="2" fill="#8a8a8a"/><rect x="13.5" y="181.3" width="10" height="2" fill="#c8c8c8"/><text x="38.3" y="188.3" font-size="14.5" font-weight="normal" fill="#d8d8d8" stroke="#d8d8d8" stroke-width="0.35" text-anchor="middle" font-family="Liberation Sans" transform="translate(38.3,0) scale(1.07,1) translate(-38.3,0)">60</text><rect x="13.5" y="161.8" width="5" height="2" fill="#8a8a8a"/><rect x="13.5" y="142.3" width="10" height="2" fill="#c8c8c8"/><text x="38.3" y="149.3" font-size="14.5" font-weight="normal" fill="#d8d8d8" stroke="#d8d8d8" stroke-width="0.35" text-anchor="middle" font-family="Liberation Sans" transform="translate(38.3,0) scale(1.07,1) translate(-38.3,0)">120</text><rect x="13.5" y="122.8" width="5" height="2" fill="#8a8a8a"/><rect x="13.5" y="103.3" width="10" height="2" fill="#c8c8c8"/><text x="38.3" y="110.3" font-size="14.5" font-weight="normal" fill="#d8d8d8" stroke="#d8d8d8" stroke-width="0.35" text-anchor="middle" font-family="Liberation Sans" transform="translate(38.3,0) scale(1.07,1) translate(-38.3,0)">180</text><rect x="13.5" y="83.8" width="5" height="2" fill="#8a8a8a"/><rect x="13.5" y="64.3" width="10" height="2" fill="#c8c8c8"/><text x="38.3" y="71.3" font-size="14.5" font-weight="normal" fill="#d8d8d8" stroke="#d8d8d8" stroke-width="0.35" text-anchor="middle" font-family="Liberation Sans" transform="translate(38.3,0) scale(1.07,1) translate(-38.3,0)">240</text><rect x="13.5" y="44.8" width="5" height="2" fill="#8a8a8a"/><rect x="13.5" y="25.3" width="10" height="2" fill="#c8c8c8"/><text x="38.3" y="32.3" font-size="14.5" font-weight="normal" fill="#d8d8d8" stroke="#d8d8d8" stroke-width="0.35" text-anchor="middle" font-family="Liberation Sans" transform="translate(38.3,0) scale(1.07,1) translate(-38.3,0)">300</text><rect x="13.3" y="56.19999999999999" width="5.5" height="165.09999999999997" fill="#b02410"/><rect x="14.2" y="56.19999999999999" width="3.7" height="165.09999999999997" fill="#d42c10"/><rect x="15.3" y="56.19999999999999" width="1.4" height="165.09999999999997" fill="#e4401c" opacity="0.8"/></svg>
<div class="u" style="left:706.6px;top:352.8px">Mode</div>
<div class="u" style="left:706.6px;top:372.9px">General Costs calculation</div>
<div class="abs" style="left:704px;top:391px;width:284px;height:21px;background:#e5e5e5;border:1px solid #adadad"></div>
<div class="u" style="left:708.2px;top:396.9px">Forecast based on last month</div>
<svg class="abs" style="left:974px;top:398px" width="10" height="6" viewBox="0 0 10 6"><path d="M0.5 0.5 L5 5 L9.5 0.5" stroke="#333" stroke-width="1.1" fill="none"/></svg>
<div class="abs" style="left:706px;top:415px;width:389px;height:216px;background:#fff;border-top:2px solid #6e6e6e;border-left:2px solid #6e6e6e;border-right:1px solid #fff;border-bottom:2px solid #fff"></div>
<div class="abs" style="left:708px;top:417px;width:368px;height:194px;overflow:hidden"><div class="abs" style="left:74px;top:0;width:1px;height:194px;background:#e8e8e8"></div><div class="abs" style="left:133px;top:0;width:1px;height:194px;background:#e8e8e8"></div><div class="abs" style="left:303.6px;top:0;width:1px;height:194px;background:#e8e8e8"></div><div class="abs" style="left:0;top:16px;width:380px;height:1px;background:#ececec"></div><div class="abs" style="left:0;top:33px;width:380px;height:1px;background:#ececec"></div><div class="abs" style="left:0;top:50px;width:380px;height:1px;background:#ececec"></div><div class="abs" style="left:0;top:67px;width:380px;height:1px;background:#ececec"></div><div class="abs" style="left:0;top:84px;width:380px;height:1px;background:#ececec"></div><div class="abs" style="left:0;top:101px;width:380px;height:1px;background:#ececec"></div><div class="abs" style="left:0;top:118px;width:380px;height:1px;background:#ececec"></div><div class="abs" style="left:0;top:135px;width:380px;height:1px;background:#ececec"></div><div class="abs" style="left:0;top:152px;width:380px;height:1px;background:#ececec"></div><div class="abs" style="left:0;top:169px;width:380px;height:1px;background:#ececec"></div><div class="abs" style="left:0;top:186px;width:380px;height:1px;background:#ececec"></div><div class="u" style="left:3.2000000000000455px;top:2.8999999999999773px">Date</div><div class="u" style="left:78.29999999999995px;top:2.8999999999999773px">Quantity</div><div class="u" style="left:137.60000000000002px;top:2.8999999999999773px">Type</div><div class="u" style="left:307.9px;top:2.8999999999999773px">Total</div><div class="abs" style="left:304px;top:34px;width:70px;height:16px;background:#0078d7"></div><div class="abs" style="left:2px;top:21px;width:9px;height:9px;border:1px solid #8a8a8a;background:linear-gradient(#fafafa,#d8d8d8)"></div><div class="abs" style="left:4px;top:25px;width:5px;height:1px;background:#2a5a9a"></div><div class="u" style="left:16.399999999999977px;top:19.8px;font-weight:bold;color:#000080;letter-spacing:0.36px">10/1/2021</div><div class="u" style="left:0;width:130.86px;text-align:right;top:19.8px;font-weight:bold;color:#000080;letter-spacing:0.36px">105.00</div><div class="u" style="left:138.20000000000005px;top:19.8px;font-weight:bold;color:#000080;letter-spacing:0.36px">Total</div><div class="u" style="left:319px;top:19.8px;font-weight:bold;color:#000080;letter-spacing:0.36px">$14,893.50</div><div class="u" style="left:16.5px;top:36.8px">10/1/2021</div><div class="u" style="left:0;width:130.77px;text-align:right;top:36.8px">5.00</div><div class="u" style="left:137.60000000000002px;top:36.8px">Christie - Boxer 4K30</div><div class="u" style="left:0;width:377.77px;text-align:right;top:36.8px;color:#fff">$6,013.75</div><div class="u" style="left:16.5px;top:53.8px">10/1/2021</div><div class="u" style="left:0;width:130.77px;text-align:right;top:53.8px">3.00</div><div class="u" style="left:137.60000000000002px;top:53.8px">Christie - Boxer 4K20</div><div class="u" style="left:0;width:377.77px;text-align:right;top:53.8px;color:#000">$3,442.50</div><div class="u" style="left:16.5px;top:70.8px">10/1/2021</div><div class="u" style="left:0;width:130.77px;text-align:right;top:70.8px">10.00</div><div class="u" style="left:137.60000000000002px;top:70.8px">HB Zoom Lens 1.99-2.71:1 Boxer</div><div class="u" style="left:0;width:377.77px;text-align:right;top:70.8px;color:#000">$1,657.50</div><div class="u" style="left:16.5px;top:87.8px">10/1/2021</div><div class="u" style="left:0;width:130.77px;text-align:right;top:87.8px">4.00</div><div class="u" style="left:137.60000000000002px;top:87.8px">NEC NP-PA653U-41ZL</div><div class="u" style="left:0;width:377.77px;text-align:right;top:87.8px;color:#000">$714.00</div><div class="u" style="left:16.5px;top:104.8px">10/1/2021</div><div class="u" style="left:0;width:130.77px;text-align:right;top:104.8px">14.00</div><div class="u" style="left:137.60000000000002px;top:104.8px">CAT5E cable 1 m</div><div class="u" style="left:0;width:377.77px;text-align:right;top:104.8px;color:#000">$274.40</div><div class="u" style="left:16.5px;top:121.8px">10/1/2021</div><div class="u" style="left:0;width:130.77px;text-align:right;top:121.8px">6.00</div><div class="u" style="left:137.60000000000002px;top:121.8px">CAT5E cable 1 m</div><div class="u" style="left:0;width:377.77px;text-align:right;top:121.8px;color:#000">$108.00</div><div class="u" style="left:16.5px;top:138.8px">10/1/2021</div><div class="u" style="left:0;width:130.77px;text-align:right;top:138.8px">6.00</div><div class="u" style="left:137.60000000000002px;top:138.8px">HDMI cable 1 m</div><div class="u" style="left:0;width:377.77px;text-align:right;top:138.8px;color:#000">$12.00</div><div class="u" style="left:16.5px;top:155.8px">10/1/2021</div><div class="u" style="left:0;width:130.77px;text-align:right;top:155.8px">4.00</div><div class="u" style="left:137.60000000000002px;top:155.8px">HDMI cable 1 m</div><div class="u" style="left:0;width:377.77px;text-align:right;top:155.8px;color:#000">$8.00</div><div class="u" style="left:16.5px;top:172.8px">10/1/2021</div><div class="u" style="left:0;width:130.77px;text-align:right;top:172.8px">20.00</div><div class="u" style="left:137.60000000000002px;top:172.8px">USB cable 1 m</div><div class="u" style="left:0;width:377.77px;text-align:right;top:172.8px;color:#000">$56.00</div><div class="u" style="left:16.5px;top:189.8px">10/1/2021</div><div class="u" style="left:0;width:130.77px;text-align:right;top:189.8px">2.00</div><div class="u" style="left:137.60000000000002px;top:189.8px">RS-232C cable 1 m</div><div class="u" style="left:0;width:377.77px;text-align:right;top:189.8px;color:#000">$6.00</div></div>
<div class="abs" style="left:1076px;top:417px;width:17px;height:194px;background:#f0f0f0"></div>
<div class="abs" style="left:1077px;top:434px;width:14px;height:103px;background:#cdcdcd"></div>
<svg class="abs" style="left:1080px;top:422px" width="9" height="6" viewBox="0 0 9 6"><path d="M0.8 5 L4.5 1.2 L8.2 5" stroke="#555" stroke-width="1.6" fill="none"/></svg>
<div class="abs" style="left:708px;top:611px;width:385px;height:18px;background:#f0f0f0"></div>
<div class="abs" style="left:725px;top:613px;width:322px;height:14px;background:#cdcdcd"></div>
<svg class="abs" style="left:713px;top:616px" width="6" height="9" viewBox="0 0 6 9"><path d="M5 0.8 L1.2 4.5 L5 8.2" stroke="#555" stroke-width="1.6" fill="none"/></svg>
<svg class="abs" style="left:1065px;top:616px" width="6" height="9" viewBox="0 0 6 9"><path d="M1 0.8 L4.8 4.5 L1 8.2" stroke="#555" stroke-width="1.6" fill="none"/></svg>
<svg class="abs" style="left:1080px;top:599px" width="9" height="6" viewBox="0 0 9 6"><path d="M0.8 1 L4.5 4.8 L8.2 1" stroke="#555" stroke-width="1.6" fill="none"/></svg>
<div class="abs" style="left:333.9px;top:61.0px;width:25px;height:25px;border-radius:50%;background:#e8621a;box-shadow:3px 3px 5px rgba(0,0,0,0.55)"></div>
<div class="t" style="left:333.9px;top:67.0px;width:25px;text-align:center;font-size:14px;font-weight:bold;color:#fff">12</div>
<div class="abs" style="left:886.0px;top:18.9px;width:25px;height:25px;border-radius:50%;background:#e8621a;box-shadow:3px 3px 5px rgba(0,0,0,0.55)"></div>
<div class="t" style="left:886.0px;top:24.9px;width:25px;text-align:center;font-size:14px;font-weight:bold;color:#fff">13</div>
<div class="abs" style="left:341.9px;top:177.0px;width:25px;height:25px;border-radius:50%;background:#e8621a;box-shadow:3px 3px 5px rgba(0,0,0,0.55)"></div>
<div class="t" style="left:341.9px;top:183.0px;width:25px;text-align:center;font-size:14px;font-weight:bold;color:#fff">14</div>
<div class="abs" style="left:328.1px;top:307.1px;width:25px;height:25px;border-radius:50%;background:#e8621a;box-shadow:3px 3px 5px rgba(0,0,0,0.55)"></div>
<div class="t" style="left:328.1px;top:313.1px;width:25px;text-align:center;font-size:14px;font-weight:bold;color:#fff">15</div>
<div class="abs" style="left:32.9px;top:598.2px;width:25px;height:25px;border-radius:50%;background:#e8621a;box-shadow:3px 3px 5px rgba(0,0,0,0.55)"></div>
<div class="t" style="left:32.9px;top:604.2px;width:25px;text-align:center;font-size:14px;font-weight:bold;color:#fff">16</div>
</body></html>
